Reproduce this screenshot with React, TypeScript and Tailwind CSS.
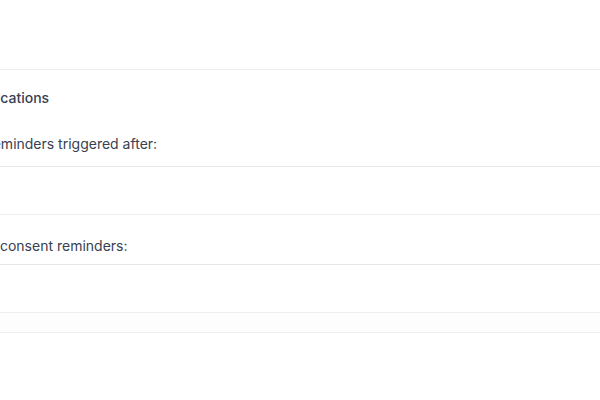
export default function App() {
  return (
    <div
      className="min-h-screen bg-white overflow-hidden text-[#374151]"
      style={{ fontFamily: "Inter, 'Noto Sans', sans-serif" }}
    >
      <div className="h-[69px]" />
      <section className="border-t border-[#eeeeee]">
        <div className="-ml-[36px]">
          {/* Notifications heading */}
          <h2 className="mt-[18px] text-sm leading-5 font-medium">Notifications</h2>

          <label className="block mt-[26px] text-sm leading-5 -ml-[2px]">Set reminders triggered after:</label>
          <div className="mt-3 h-[49px] border-y border-t-[#e5e7eb] border-b-[#eeeeee]" />

          <label className="block mt-[21px] text-sm leading-5 -ml-[2px]">Send consent reminders:</label>
          <div className="mt-2 h-[49px] border-y border-t-[#e5e7eb] border-b-[#eeeeee]" />
        </div>
        <div className="h-[19px] bg-[#fdfdfd]" />
        <div className="border-t border-[#eeeeee]" />
      </section>
    </div>
  );
}
